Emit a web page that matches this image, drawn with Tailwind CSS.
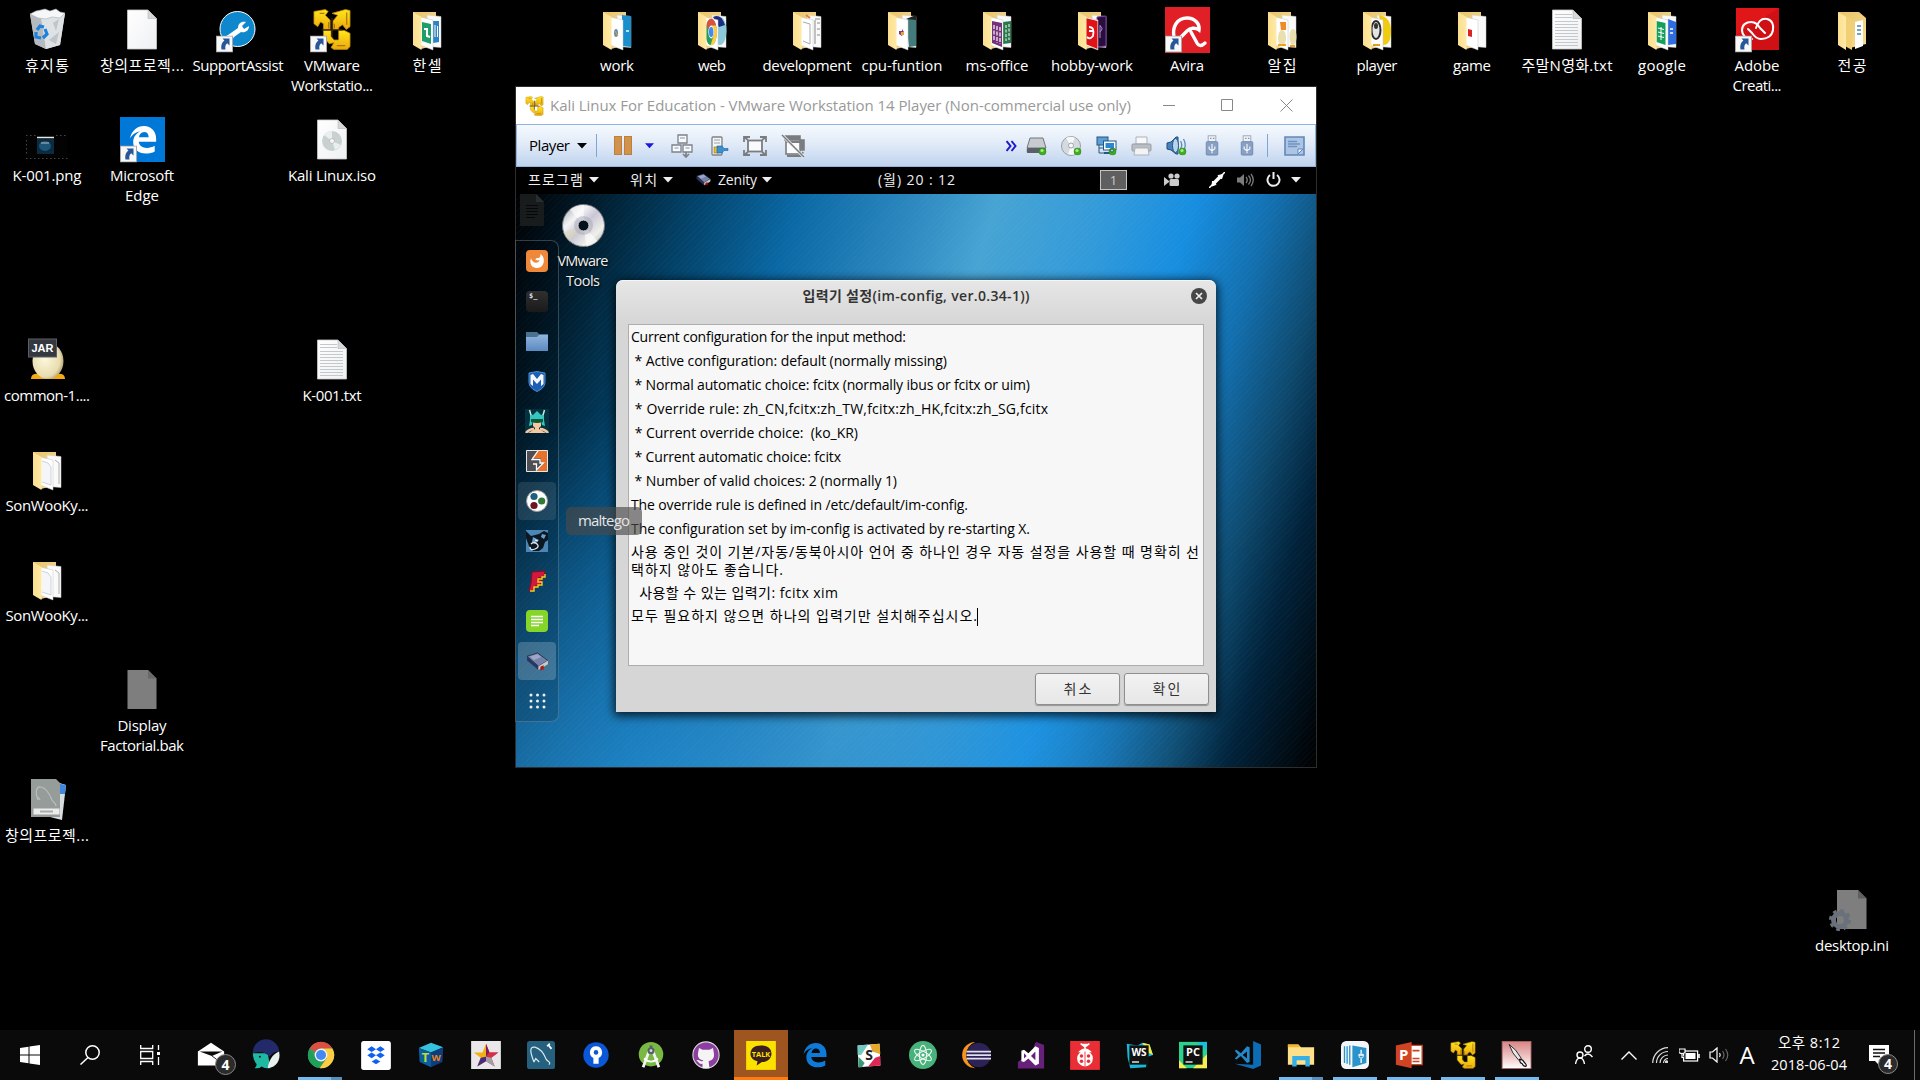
<!DOCTYPE html>
<html lang="ko">
<head>
<meta charset="utf-8">
<title>Desktop</title>
<script src="https://cdn.jsdelivr.net/npm/@tailwindcss/browser@4"></script>
</head>
<body class="bg-black overflow-hidden">
<svg width="0" height="0" class="absolute">
  <defs>
    <linearGradient id="gBack" x1="0" y1="0" x2="1" y2="1"><stop offset="0" stop-color="#e9c46c"/><stop offset="1" stop-color="#f7dc8e"/></linearGradient>
    <linearGradient id="gFlap" x1="0" y1="0" x2="1" y2="0"><stop offset="0" stop-color="#fbdf8d"/><stop offset="1" stop-color="#ffe9a6"/></linearGradient>
    <linearGradient id="gPage" x1="0" y1="0" x2="1" y2="1"><stop offset="0" stop-color="#ffffff"/><stop offset="1" stop-color="#eef0f2"/></linearGradient>
    <linearGradient id="gVm" x1="0" y1="0" x2="0" y2="1"><stop offset="0" stop-color="#ffe61c"/><stop offset="1" stop-color="#eda80e"/></linearGradient>
    <linearGradient id="gDisc" x1="0" y1="0" x2="1" y2="1"><stop offset="0" stop-color="#9a9ca4"/><stop offset=".3" stop-color="#f4f4f6"/><stop offset=".5" stop-color="#c9c6d6"/><stop offset=".75" stop-color="#f0f0ea"/><stop offset="1" stop-color="#a5a5ad"/></linearGradient>
    <linearGradient id="gBlueV" x1="0" y1="0" x2="0" y2="1"><stop offset="0" stop-color="#8fb4dd"/><stop offset="1" stop-color="#5b8ac0"/></linearGradient>
    <radialGradient id="gEgg" cx=".4" cy=".45" r=".7"><stop offset="0" stop-color="#fdf8dc"/><stop offset=".7" stop-color="#e8dcae"/><stop offset="1" stop-color="#8f8050"/></radialGradient>
    <linearGradient id="gKnife" x1="0" y1="0" x2="0" y2="1"><stop offset="0" stop-color="#d98484"/><stop offset=".6" stop-color="#f0caca"/><stop offset="1" stop-color="#fff"/></linearGradient>
  </defs>
  <symbol id="page" viewBox="0 0 48 48"><path d="M9.500 5h20.500l8.500 8.500v30.500h-29z" fill="url(#gPage)" stroke="#c9c9c9" stroke-width=".8"/><path d="M30 5v8.500h8.500z" fill="#d5d7d9" stroke="#b5b5b5" stroke-width=".6"/></symbol>
  <symbol id="lines" viewBox="0 0 48 48"><path d="M12 9.500h17M12 12.500h17M12 16.500h23M12 19.500h23M12 22.500h23M12 25.500h23M12 28.500h23M12 31.500h23M12 34.500h23M12 37.500h23M12 40.500h23" stroke="#c5c8cb" stroke-width="1"/></symbol>
  <symbol id="short" viewBox="0 0 17 17"><rect x=".5" y=".5" width="16" height="16" fill="#f8f8f8" stroke="#a8a8a8"/><path d="M13.500 3v7l-2.300-2.300c-2 1.800-2.200 3.300-1.700 6.300h-4c-.8-4.500.6-7.200 2.900-9L6.500 3z" fill="#28569a"/></symbol>
  <symbol id="vm" viewBox="0 0 40 44"><g fill="url(#gVm)" stroke="#b8860b" stroke-width=".8" stroke-linejoin="round"><path d="M1 3l12-2 3 2-3 4 5 5v10h-7v-6l-3-2-3 5-4-3z"/><path d="M20 5l14-4 5 1v17l-4 3-4-5-4 3v2h-6v-9l5-6z"/><path d="M11 23h8v6l3 4h5V23h6l6 3v14l-3 3H22l-3-2 3-5-5 1-6-7z"/></g><path d="M35.500 4v13M7 5h5M25 39h9M16.500 14v7M22.500 16v5" stroke="#a87a08" stroke-width="1.300"/><path d="M9 22.300h22M20 10v20" stroke="#3a2900" stroke-width="1.300"/></symbol>
  <symbol id="edge" viewBox="0 0 32 32"><path d="M2 15C4 6 10 1.500 17 1.500c8 0 13 6 13 13.500v3.500H11.500c.3 4.200 4 6.500 8.500 6.500 3.200 0 6-.8 8.500-2.300v6C26 30.200 22.500 31 19 31c-8 0-13.500-5-13.500-12 0-5.500 3-9.500 7.500-11.500C8 8 4.500 11 2 15zm9.700-1.500H22c0-3.500-1.800-5.500-4.900-5.500-3 0-4.900 2.400-5.400 5.500z"/></symbol>
  <symbol id="chrome" viewBox="0 0 32 32"><circle cx="16" cy="16" r="15" fill="#34a05a"/><path d="M3 8.500A15 15 0 0129 8.500H16a7.500 7.500 0 00-6.500 3.700z" fill="#dd4f40"/><path d="M3 8.500L9.500 20 16 23.500l-3 7.200A15 15 0 013 8.500z" fill="#1f9f5b"/><path d="M29 8.500A15 15 0 0114.500 31L22.500 19.700 16 8.500z" fill="#ffcd43"/><circle cx="16" cy="16" r="7.300" fill="#f1f1f1"/><circle cx="16" cy="16" r="5.700" fill="#4587f3"/></symbol>
  <symbol id="tri" viewBox="0 0 10 6"><path d="M0 0h10L5 5.500z" fill="currentColor"/></symbol>
  <symbol id="ball" viewBox="0 0 8 8"><circle cx="4" cy="4" r="3.600" fill="#3fae22" stroke="#267c12" stroke-width=".5"/><circle cx="3.500" cy="3" r="1.600" fill="#a3ee7c"/></symbol>
  <symbol id="usb" viewBox="0 0 14 22"><rect x="3" y=".8" width="8" height="7" fill="#eef1f5" stroke="#9fa9b8"/><path d="M5 3.500h1.500M8 3.500h1.500" stroke="#8894a6" stroke-width="1.500"/><rect x="1" y="7" width="12" height="14" rx="1" fill="#87a0c4" stroke="#6e88b0"/><path d="M7 19V9.500M4 12v2.500l3 2 3-2V12" stroke="#fff" stroke-width="1.100" fill="none"/></symbol>
  <symbol id="book" viewBox="0 0 24 20"><path d="M1 4.500L12 1l11 8-10 6z" fill="#7582ab" stroke="#1c2440" stroke-width=".8"/><path d="M1 5l12 10v4L1 9z" fill="#2b3560"/><path d="M13 15l10-6v4l-10 6z" fill="#c9c9c6"/><path d="M15 15.500l3.500-1.500v5.500L17 18l-2 2z" fill="#b01515"/><path d="M4 4.800l8-2.500 4 3-8 3.500z" fill="#a7b0cd" opacity=".8"/></symbol>
</svg>

<main class="relative w-[1920px] h-[1080px] overflow-hidden bg-black text-white font-['Open_Sans','Noto_Sans_CJK_KR',sans-serif]">
  <div id="desktop"></div>

  <!-- VMware player window -->
  <section class="absolute left-[515px] top-[86px] w-[802px] h-[682px] flex flex-col border border-[#2d2d2d] bg-black">
    <header class="h-[37px] shrink-0 bg-white flex items-center text-[#999]">
      <svg class="w-[19px] h-[20px] ml-[9px]"><use href="#vm"/></svg>
      <span class="ml-[6px] text-[15px] whitespace-pre" data-w="581">Kali Linux For Education - VMware Workstation 14 Player (Non-commercial use only)</span>
      <svg class="ml-auto w-[13px] h-[13px] mr-[45px]" viewBox="0 0 13 13"><path d="M0 6.500h12" stroke="#888"/></svg>
      <svg class="w-[13px] h-[13px] mr-[46px]" viewBox="0 0 13 13"><path d="M.5.500h11v11H.5z" fill="none" stroke="#888"/></svg>
      <svg class="w-[13px] h-[13px] mr-[23px]" viewBox="0 0 13 13"><path d="M.5.500l12 12M12.500.500l-12 12" stroke="#888"/></svg>
    </header>
    <div class="h-[43px] shrink-0 border border-[#92b5e0] border-t-[#8fb3e2] bg-linear-to-b from-[#f6fafe] via-[#dfe9f7] to-[#bfd3ee] flex items-center text-black">
      <span class="ml-[12px] text-[15px] -mt-[1px]" data-w="41">Player</span>
      <svg class="w-[10px] h-[6px] ml-[7px]"><use href="#tri"/></svg>
      <i class="w-px h-[23px] bg-[#7fa5d6] ml-[9px]"></i>
      <div class="flex gap-[2px] ml-[17px]"><i class="w-[8px] h-[19px] bg-[#d3924c] border border-[#b9803f]"></i><i class="w-[8px] h-[19px] bg-[#d3924c] border border-[#b9803f]"></i></div>
      <svg class="w-[9px] h-[6px] ml-[13px] text-[#1a1ad8]"><use href="#tri"/></svg>
      <svg class="w-[22px] h-[24px] ml-[17px]" viewBox="0 0 22 24" fill="#f8f9fb" stroke="#7d8187" stroke-width="1.300"><path d="M7 1h9v8H7zM1 11h9v7H1zM12 11h9v7h-9z"/><path d="M9 4h5M3.500 14h4M14.500 14h4" stroke="#b4c9df" stroke-width="2"/><path d="M15 18v5M12 20l3 3 3-3" fill="none" stroke-width="1.700"/></svg>
      <svg class="w-[18px] h-[20px] ml-[18px]" viewBox="0 0 18 20"><rect x="1" y="1" width="10" height="18" rx="1" fill="#f4f5f6" stroke="#7d8187" stroke-width="1.300"/><path d="M3 4h6M3 7h6" stroke="#9aa0a7"/><rect x="3" y="11" width="5" height="6" fill="#e2bd38" stroke="#937716" stroke-width=".6"/><path d="M6 10h5l2 2.500h4v2h-4L11 17H6z" fill="#3b8fd0" stroke="#1d5f98" stroke-width=".6"/></svg>
      <svg class="w-[24px] h-[20px] ml-[14px]" viewBox="0 0 24 20" fill="none" stroke="#7a7c80" stroke-width="1.800"><rect x="5" y="4.500" width="14" height="11" fill="#f9fafc"/><path d="M1 6V1h6M17 1h6v5M23 14v5h-6M7 19H1v-5M1 1l4 3M23 1l-4 3M23 19l-4-3M1 19l4-3"/></svg>
      <svg class="w-[24px] h-[24px] ml-[14px]" viewBox="0 0 24 24" stroke="#7a7c80" stroke-width="1.600"><path d="M4 2h15v4h4v10h-4V6H4z" fill="#7a7c80"/><rect x="5" y="6" width="14" height="14" fill="#fafbfd"/><path d="M5 8h14M6 22h14l2-4" fill="none" stroke-width="2"/><path d="M1 1l22 22" stroke="#f5f5f5" stroke-width="3"/><path d="M1 1l22 22"/></svg>
      <svg class="ml-auto w-[11px] h-[12px]" viewBox="0 0 11 12" fill="none" stroke="#1a1ad0" stroke-width="2"><path d="M.5 1l4 5-4 5M5.500 1l4 5-4 5"/></svg>
      <svg class="w-[21px] h-[20px] ml-[9px]" viewBox="0 0 21 20"><path d="M4 2h13l3 10H1z" fill="#c7cbcf" stroke="#72777d"/><rect x=".8" y="12" width="19" height="5" rx="1" fill="#5a6067"/><use href="#ball" x="12.500" y="11.500" width="8" height="8"/></svg>
      <svg class="w-[21px] h-[20px] ml-[14px]" viewBox="0 0 21 20"><circle cx="10" cy="10" r="9.500" fill="#d5dade" stroke="#98a0a7"/><path d="M10 10L5 2a9 9 0 019 0zM10 10l6 7a9 9 0 01-9 1z" fill="#fff" opacity=".8"/><circle cx="10" cy="9.500" r="2.500" fill="#f8fafc" stroke="#9aa4ad"/><use href="#ball" x="12.500" y="11.500" width="8" height="8"/></svg>
      <svg class="w-[21px] h-[20px] ml-[14px]" viewBox="0 0 21 20" stroke="#23587f"><rect x="1" y="1" width="11" height="8" fill="#5b9fd6"/><path d="M3 9v8h5M3 12h4" fill="none"/><rect x="7.500" y="5" width="12.500" height="9" fill="#fff"/><rect x="9.500" y="7" width="8.500" height="5" fill="#2a87d3" stroke="none"/><path d="M8 17h9" stroke-width="2"/><use href="#ball" x="12.500" y="11.500" width="8" height="8"/></svg>
      <svg class="w-[21px] h-[20px] ml-[14px]" viewBox="0 0 21 20"><path d="M5 1h11v7H5z" fill="#f7f8f9" stroke="#aeb2b8"/><rect x="1" y="8" width="19" height="7" rx="1" fill="#b9bdc4" stroke="#989da5"/><path d="M4 12h13l1 7H3z" fill="#f2f3f5" stroke="#aeb2b8"/></svg>
      <svg class="w-[21px] h-[20px] ml-[14px]" viewBox="0 0 21 20"><path d="M1 7l4-1 5-5h2v17h-2l-5-4-4-1z" fill="#4783ba" stroke="#1e4f80"/><ellipse cx="9.500" cy="9.500" rx="3" ry="7" fill="#b7d4ec" stroke="#27587f"/><path d="M14.500 5q2.500 4 0 8M17.500 3q3.500 6 0 12" fill="none" stroke="#5a8cbb" stroke-width="1.300"/><use href="#ball" x="12.500" y="11.500" width="8" height="8"/></svg>
      <svg class="w-[14px] h-[21px] ml-[18px]"><use href="#usb"/></svg>
      <svg class="w-[14px] h-[21px] ml-[21px]"><use href="#usb"/></svg>
      <i class="w-px h-[23px] bg-[#7fa5d6] ml-[13px]"></i>
      <svg class="w-[21px] h-[20px] ml-[16px] mr-[10px]" viewBox="0 0 21 20"><path d="M1 1h19v18H1z" fill="#adc5e4" stroke="#6387b8" stroke-width="1.600"/><path d="M4 5.500h9M4 8h12M4 10.500h9" stroke="#6e92c1" stroke-width="1.500"/><path d="M14 18v-5h5z" fill="#eef4fb" stroke="#6387b8"/></svg>
    </div>

    <!-- Guest desktop -->
    <div class="relative w-[800px] h-[600px] flex flex-col text-[#eee]">
      <div class="h-[27px] shrink-0 bg-black flex items-center text-[14px] pb-[2px]">
        <span class="ml-[12px]" data-w="55">프로그램</span><svg class="w-[10px] h-[6px] ml-[6px]"><use href="#tri"/></svg>
        <span class="ml-[31px]" data-w="27">위치</span><svg class="w-[10px] h-[6px] ml-[6px]"><use href="#tri"/></svg>
        <svg class="w-[15px] h-[13px] ml-[23px]"><use href="#book"/></svg>
        <span class="ml-[7px]" data-w="39">Zenity</span><svg class="w-[10px] h-[6px] ml-[5px]"><use href="#tri"/></svg>
        <span class="ml-[106px] whitespace-pre" data-w="77">(월) 20 : 12</span>
        <span class="ml-auto w-[27px] h-[20px] mt-px border border-[#c4c4c4] bg-[#5f5f5f] text-center leading-[18px] text-[13px] text-[#ccc]">1</span>
        <svg class="w-[16px] h-[13px] ml-[37px]" viewBox="0 0 16 13" fill="#ccc"><circle cx="7" cy="3" r="2.600"/><circle cx="13" cy="3" r="2.600"/><rect x="5.500" y="6" width="9.500" height="7" rx="1.500"/><path d="M0 4l5 4v1l-5 4z"/></svg>
        <svg class="w-[16px] h-[16px] ml-[29px]" viewBox="0 0 16 16" stroke="#fff" fill="#fff"><path d="M0 16L16 0" stroke-width="1.500"/><path d="M3.500 9l3.500 3.500-4 1.500zM9 3.500L12.500 7 14 2.500z" stroke-width="1"/><path d="M5 11l6-6" stroke-width="3.500"/></svg>
        <svg class="w-[17px] h-[14px] ml-[12px]" viewBox="0 0 17 14" fill="#7b7b7b"><path d="M0 4.500h3L7 1v12L3 9.500H0z"/><path d="M9 4q2.500 3 0 6M11.500 2.500q4 4.500 0 9M14 1q4.500 6 0 12" fill="none" stroke="#7b7b7b" stroke-width="1.300"/></svg>
        <svg class="w-[15px] h-[15px] ml-[12px]" viewBox="0 0 15 15" fill="none" stroke="#eee" stroke-width="2"><path d="M4 3a6 6 0 107 0M7.500 0v7"/></svg>
        <svg class="w-[10px] h-[6px] ml-[10px] mr-[15px]"><use href="#tri"/></svg>
      </div>
      <div class="relative flex-1 bg-[linear-gradient(107deg,#000_0%,#000a12_3%,#01263c_11%,#03446c_19%,#0a68a4_29%,#2c88bf_41%,#47a4d3_49.5%,#349bd9_60%,#178ee0_70%,#136fae_78%,#0e4a6f_85%,#01223a_91%,#000_100%)]">
        <div class="absolute inset-0 bg-[radial-gradient(ellipse_55%_75%_at_16%_112%,rgba(36,140,208,.75)_0%,rgba(30,125,190,.45)_45%,transparent_100%),linear-gradient(180deg,transparent_60%,rgba(80,190,255,.14)_100%)] [mask-image:linear-gradient(107deg,#000_75%,transparent_90%)]"></div>
        <div class="absolute inset-0 bg-[repeating-linear-gradient(135deg,rgba(255,255,255,.02)_0_1px,transparent_1px_4px)]"></div>
        <svg class="absolute left-[4px] top-0 w-[24px] h-[32px]" viewBox="0 0 24 32"><path d="M0 0h16l8 8v24H0z" fill="#191c1d"/><path d="M16 0v8h8z" fill="#2a2d2e"/><path d="M6 11.500h12M6 14.500h12M6 17.500h12M6 20.500h12M6 23.500h9" stroke="#060707"/></svg>
        <div class="absolute left-[37px] top-[10px] w-[60px] flex flex-col items-center text-[14.500px] leading-[20px] [text-shadow:1px_1px_2px_#000]">
          <svg class="w-[43px] h-[43px] mb-[4px]" viewBox="0 0 43 43"><circle cx="21.500" cy="21.500" r="21" fill="url(#gDisc)" stroke="#77777c"/><path d="M21.500 21.500L8 5.500A21 21 0 0122 1zM21.500 21.500l14 15.500a21 21 0 01-11 5.500z" fill="#fff" opacity=".6"/><path d="M21.500 21.500L1.500 28a21 21 0 006 9.500z" fill="#d9d7b8" opacity=".5"/><circle cx="21.500" cy="21.500" r="9.500" fill="#a9a5b6" opacity=".5"/><circle cx="21.500" cy="21.500" r="5.500" fill="#03111c" stroke="#dcdcdc"/></svg>
          <span data-w="51">VMware</span><span data-w="34">Tools</span>
        </div>
        <!-- Dock -->
        <div class="absolute left-[-1px] top-[46px] w-[44px] h-[482px] rounded-r-[8px] border border-[#8fa3b0]/35 bg-black/15 flex flex-col items-center">
          <div class="h-[40px] shrink-0 w-[38px] flex items-center justify-center"><svg class="w-[22px] h-[22px]" viewBox="0 0 22 22"><rect width="22" height="22" rx="4" fill="#f0883a"/><path d="M5 8c-2 6 1 10 6 10s8-5 6.500-10C17 6 15 4 14 4c1 2 0 3.500-1.500 4C11 8 9.500 8 9.500 9.500c1 1.500 3 .5 4 1-1 2.500-4.500 3-6.500 1S5.500 9 5 8z" fill="#fff"/></svg></div>
          <div class="h-[40px] shrink-0 w-[38px] flex items-center justify-center"><div class="w-[22px] h-[21px] rounded-[4px] bg-linear-to-b from-[#303030] to-[#1a1a1a] text-[7px] leading-[11px] pl-[3px] font-['DejaVu_Sans_Mono',monospace] font-bold text-[#ddd]">$_</div></div>
          <div class="h-[40px] shrink-0 w-[38px] flex items-center justify-center"><svg class="w-[22px] h-[20px]" viewBox="0 0 22 20"><path d="M0 1h11l2 2h9v6H0z" fill="#4b7191"/><path d="M0 6h11l2-2h9v16H0z" fill="url(#gBlueV)"/></svg></div>
          <div class="h-[40px] shrink-0 w-[38px] flex items-center justify-center"><svg class="w-[18px] h-[21px]" viewBox="0 0 18 21"><path d="M1 2l8-1.500L17 2v9c0 5-4 7.500-8 9.500-4-2-8-4.500-8-9.500z" fill="#1d5fb4" stroke="#4c8fd6"/><path d="M2.500 4L5 3l4 5 4-5 2.500 1v9L13 15V8.500L9 13 5 8.500V15l-2.500-2z" fill="#f4f7fb"/></svg></div>
          <div class="h-[40px] shrink-0 w-[38px] flex items-center justify-center"><svg class="w-[24px] h-[24px]" viewBox="0 0 24 24"><rect width="24" height="24" fill="#04323e"/><path d="M8 13h8v4l-2 2v1l7 4H3l7-4v-1l-2-2z" fill="#f4c9a0"/><path d="M5 5l3 1 4-4 4 4 3-1v6l1 6-3-1-1-5H8l-1 5-3 1 1-6z" fill="#35c6c4"/><path d="M6 10h12v3q-6 2-12 0z" fill="#0b5a34"/><path d="M4.500 1l1.500 5M19.500 1L18 6" stroke="#c7ecd6" stroke-width="1.500"/><path d="M1 24q3-4 8-4M23 24q-3-4-8-4" stroke="#f4c9a0" stroke-width="2.500"/></svg></div>
          <div class="h-[40px] shrink-0 w-[38px] flex items-center justify-center"><svg class="w-[22px] h-[22px]" viewBox="0 0 22 22"><path d="M.5.500h21v21H.5z" fill="#e9722a"/><path d="M.5.500h11L6 8h9v4.500h4L10 21.500H.5z" fill="#4d4f54"/><path d="M12 1L6 9.500h8V13h3.500L10.500 20v-6H7" fill="none" stroke="#fff" stroke-width="1.300"/><path d="M.5.500h21v21H.5z" fill="none" stroke="#e8e8e8"/></svg></div>
          <div class="h-[38px] shrink-0 my-px w-[38px] flex items-center justify-center rounded-[4px] bg-white/10"><svg class="w-[22px] h-[22px]" viewBox="0 0 22 22"><circle cx="11" cy="11" r="10.500" fill="#fff" stroke="#999"/><circle cx="8" cy="6.500" r="3.600" fill="#1f5f7e"/><circle cx="15.700" cy="11" r="3.600" fill="#2f7a38"/><circle cx="8" cy="15.500" r="3.600" fill="#701623"/></svg></div>
          <div class="h-[40px] shrink-0 w-[38px] flex items-center justify-center"><svg class="w-[22px] h-[22px]" viewBox="0 0 22 22"><rect width="22" height="22" fill="#4b86b6"/><path d="M0 1l5 5 8-2 5-3 4 2v7l-3 2-2 6-4 3H7l-4-5L0 8z" fill="#0c1721"/><path d="M7 7l6 3-4 4-3-2zM16 4l4 1-2 4-3-2z" fill="#69a1cc"/><path d="M5 14q3-3 6 0t-2 5-5-2" fill="none" stroke="#dce9f2" stroke-width="1.300"/><path d="M9 10l3 1" stroke="#fff"/></svg></div>
          <div class="h-[40px] shrink-0 w-[38px] flex items-center justify-center"><svg class="w-[19px] h-[22px]" viewBox="0 0 19 22"><path d="M4 2l13-1-1 6-6 1-1 2 5 0-2 5-5 1-1 4-5 1 2-8z" fill="#d2183c" stroke="#8c0a20"/><path d="M17 4v3h-3v2h-4v3h4v3h-4v2H6v4H2" fill="none" stroke="#f7cf1d" stroke-width="1.400"/></svg></div>
          <div class="h-[40px] shrink-0 w-[38px] flex items-center justify-center"><svg class="w-[22px] h-[22px]" viewBox="0 0 22 22"><rect width="22" height="22" rx="4" fill="#86d62a"/><path d="M5 6.500h12M5 9.500h12M5 12.500h12M5 15.500h8" stroke="#fff" stroke-width="1.300"/></svg></div>
          <div class="relative h-[38px] shrink-0 my-px w-[38px] flex items-center justify-center rounded-[4px] bg-white/20"><svg class="w-[23px] h-[19px]"><use href="#book"/></svg><i class="absolute left-0 top-[17px] w-[3px] h-[3px] rounded-full bg-[#2e6fd0]"></i></div>
          <div class="h-[40px] shrink-0 w-[38px] flex items-center justify-center"><svg class="w-[17px] h-[16px]" viewBox="0 0 17 16" fill="#eee"><circle cx="2" cy="2" r="1.500"/><circle cx="8.500" cy="2" r="1.500"/><circle cx="15" cy="2" r="1.500"/><circle cx="2" cy="8" r="1.500"/><circle cx="8.500" cy="8" r="1.500"/><circle cx="15" cy="8" r="1.500"/><circle cx="2" cy="14" r="1.500"/><circle cx="8.500" cy="14" r="1.500"/><circle cx="15" cy="14" r="1.500"/></svg></div>
        </div>
        <!-- Dialog -->
        <div class="absolute left-[100px] top-[86px] w-[600px] h-[432px] rounded-t-[7px] bg-[#d6d6d6] shadow-[0_2px_10px_2px_rgba(0,0,0,.75)] flex flex-col text-black">
          <div class="relative h-[44px] shrink-0 rounded-t-[7px] border-t border-white/80 bg-linear-to-b from-[#e6e6e6] to-[#d6d6d6] flex justify-center pt-[5px]">
            <b class="text-[14px] leading-[20px] font-semibold text-[#333] whitespace-pre h-[20px]" data-w="227">입력기 설정(im-config, ver.0.34-1))</b>
            <svg class="absolute right-[9px] top-[7px] w-[16px] h-[16px]" viewBox="0 0 16 16"><circle cx="8" cy="8" r="8" fill="#474747"/><path d="M5 5l6 6M11 5l-6 6" stroke="#eee" stroke-width="1.700"/></svg>
          </div>
          <div class="ml-[12px] w-[576px] h-[342px] border border-[#adadad] bg-[#f7f7f7] pl-[2px] text-[14px] leading-[24px] whitespace-pre flex flex-col items-start">
            <span class="h-[24px]" data-w="275">Current configuration for the input method:</span>
            <span class="h-[24px]" data-w="316"> * Active configuration: default (normally missing)</span>
            <span class="h-[24px]" data-w="399"> * Normal automatic choice: fcitx (normally ibus or fcitx or uim)</span>
            <span class="h-[24px]" data-w="417"> * Override rule: zh_CN,fcitx:zh_TW,fcitx:zh_HK,fcitx:zh_SG,fcitx</span>
            <span class="h-[24px]" data-w="227"> * Current override choice:  (ko_KR)</span>
            <span class="h-[24px]" data-w="210"> * Current automatic choice: fcitx</span>
            <span class="h-[24px]" data-w="266"> * Number of valid choices: 2 (normally 1)</span>
            <span class="h-[24px]" data-w="337">The override rule is defined in /etc/default/im-config.</span>
            <span class="h-[24px]" data-w="399">The configuration set by im-config is activated by re-starting X.</span>
            <span class="h-[22px] leading-[22px]" data-w="568">사용 중인 것이 기본/자동/동북아시아 언어 중 하나인 경우 자동 설정을 사용할 때 명확히 선</span>
            <span class="h-[16px] leading-[14px]" data-w="152">택하지 않아도 좋습니다.</span>
            <span class="h-[28px] leading-[27px]" data-w="207">  사용할 수 있는 입력기: fcitx xim</span>
            <div class="flex h-[19px] items-center"><span class="leading-[18px] -mt-px" data-w="346">모두 필요하지 않으면 하나의 입력기만 설치해주십시오.</span><i class="w-px h-[18px] bg-black"></i></div>
          </div>
          <div class="flex justify-end gap-[4px] pr-[7px] pt-[7px] text-[14px] text-[#333]">
            <div class="w-[85px] h-[32px] pb-[2px] rounded-[3px] border border-[#8f8f8f] bg-linear-to-b from-[#f2f2f2] to-[#e7e7e7] shadow-[0_1px_1px_rgba(0,0,0,.3)] flex items-center justify-center"><span data-w="28">취소</span></div>
            <div class="w-[85px] h-[32px] pb-[2px] rounded-[3px] border border-[#8f8f8f] bg-linear-to-b from-[#f2f2f2] to-[#e7e7e7] shadow-[0_1px_1px_rgba(0,0,0,.3)] flex items-center justify-center"><span data-w="28">확인</span></div>
          </div>
        </div>
        <div class="absolute left-[50px] top-[313px] w-[76px] h-[28px] pb-[2px] rounded-[5px] bg-[#4a4a4a]/65 flex items-center justify-center text-[15px] text-[#e6e6e6]"><span data-w="52">maltego</span></div>
      </div>
    </div>
  </section>

  <!-- Taskbar -->
  <footer class="absolute left-0 top-[1030px] w-[1920px] h-[50px] bg-[#0a0a0a] flex items-center">
    <div class="w-[60px] flex justify-center"><svg class="w-[20px] h-[20px]" viewBox="0 0 20 20" fill="#fff"><path d="M0 3l8.500-1.200v7.700H0zM9.500 1.600L20 0v9.500H9.500zM0 10.500h8.500v7.700L0 17zM9.500 10.500H20V20L9.500 18.400z"/></svg></div>
    <div class="w-[60px] flex justify-center"><svg class="w-[20px] h-[20px]" viewBox="0 0 20 20" fill="none" stroke="#fff" stroke-width="1.500"><circle cx="12.500" cy="7.500" r="6.700"/><path d="M8 12.500L.5 19.500"/></svg></div>
    <div class="w-[63px] flex justify-center pr-[3px]"><svg class="w-[20px] h-[20px]" viewBox="0 0 20 20" fill="none" stroke="#fff" stroke-width="1.300"><path d="M.7 0v3.500h12V0M.7 20v-3.500h12V20M.7 6.500h12v7H.7zM18.500 0v5M18.500 12v8"/><path d="M17 7h3v3h-3z" fill="#fff" stroke="none"/></svg></div>
    <div id="tasks" class="flex h-[50px]"></div>
    <svg class="ml-[31px] w-[18px] h-[20px]" viewBox="0 0 18 20" fill="none" stroke="#fff" stroke-width="1.400"><circle cx="13" cy="4" r="3.300"/><path d="M9.500 11q3.500-4.500 8 1"/><circle cx="5" cy="10" r="3"/><path d="M.5 19q1-6 4.500-6t4.500 6"/></svg>
    <svg class="ml-[28px] w-[16px] h-[9px]" viewBox="0 0 16 9" fill="none" stroke="#fff" stroke-width="1.400"><path d="M.5 8.500L8 1l7.500 7.500"/></svg>
    <svg class="ml-[15px] w-[16px] h-[16px]" viewBox="0 0 16 16" fill="none" stroke="#ddd" stroke-width="1.200"><path d="M.7 16A15.500 15.500 0 0116 .7M4.500 16A11.500 11.500 0 0116 4.500M8 16a8 8 0 018-8M11.500 16a4.500 4.500 0 014.500-4.500"/><circle cx="14.500" cy="14.800" r="1" fill="#fff"/></svg>
    <svg class="ml-[11px] w-[21px] h-[14px]" viewBox="0 0 21 14" fill="none" stroke="#fff" stroke-width="1.200"><rect x="4.600" y="3" width="14" height="10"/><rect x="6.500" y="5" width="10" height="6" fill="#fff" stroke="none"/><path d="M20 6v4" stroke-width="1.600"/><path d="M0 1h6v3.500q-3 2-6 0zM3 5v4.500h2" fill="#0a0a0a"/></svg>
    <svg class="ml-[9px] w-[20px] h-[16px]" viewBox="0 0 20 16" fill="none" stroke="#fff" stroke-width="1.200"><path d="M1 5h2.500L8 1v14l-4.500-4H1z"/><path d="M10.500 6q1.500 2 0 4"/><path d="M13.500 4q3 4 0 8M16.500 2q4.500 6 0 12" stroke="#666"/></svg>
    <span class="w-[18px] ml-[9px] text-[24px] leading-[50px] flex justify-center">A</span>
    <div class="w-[80px] ml-[13px] flex flex-col items-center text-[14.500px] leading-[22px] -mt-[2px]"><span data-w="62">오후 8:12</span><span data-w="76">2018-06-04</span></div>
    <div class="relative ml-[20px] w-[32px] h-[32px]"><svg class="absolute left-[0px] top-[6px] w-[20px] h-[21px]" viewBox="0 0 20 21"><path d="M0 0h20v16h-9v5l-5-5H0z" fill="#fff"/><path d="M4 4.500h12M4 8h12M4 11.500h7" stroke="#111" stroke-width="1.400"/></svg><b class="absolute left-[9px] top-[15px] w-[20px] h-[20px] rounded-full border border-[#888] bg-[#2b2b2b] text-[14px] leading-[18px] text-center">4</b></div>
    <i class="ml-auto mr-[5px] w-px h-[50px] bg-[#6b6b6b]"></i>
  </footer>
</main>

<script>
const page = '<use href="#page"/>';
const shortcut = '<use href="#short" x="2" y="30.500" width="17" height="17"/>';
// Open folder seen from the side; front and back are the previews drawn on its two sheets.
const folder = (front = '', back = '') => `
  <path d="M10 7l23 0v33l-15 4z" fill="url(#gBack)"/>
  <path d="M24 10l14 1.500v31l-13-1z" fill="#fafafa" stroke="#c9c9c9" stroke-width=".5"/>${back}
  <path d="M17 12l13 3v30l-13-5z" fill="#fff" stroke="#c4c4c4" stroke-width=".5"/>${front}
  <path d="M10 7l8.500 5v33L10 40z" fill="url(#gFlap)"/>`;
const icons = {
  bin: '<path d="M7 9l35-1-5 32-14 4-11-5z" fill="#cfd3d6"/><path d="M7 9l11 3 5 32-11-5z" fill="#b4babf"/><path d="M18 12l24-4-5 32-14 4z" fill="#dfe2e4"/><path d="M7 9l6-3 5-1 4-1 5 2 6-2 4 3 5 1-5 5-8-1-6 2-8-1z" fill="#f6f7f8" stroke="#a7adb2" stroke-width=".6"/><path d="M30 18l6-4-3 12zM26 35l7 4 3-12z" fill="#bfc5c9"/><g fill="none" stroke="#1c82dc" stroke-width="3.200"><path d="M14 25l3-4 4 1M22 24l2 5-4 4M18 33l-5-1v-5"/></g>',
  page,
  support: '<circle cx="23.500" cy="24" r="17.500" fill="#0e87cd" stroke="#fff" stroke-width="1"/><path d="M14 30l10-7c0-4 3-7 8-6l-4 4 2 3 5-3c0 5-4 7-8 6l-7 5c-1 3-7 4-8 1 0-2 1-3 2-3z" fill="#fff"/>' + shortcut,
  vm: '<use href="#vm" x="5" y="3" width="38" height="43"/>' + shortcut,
  hancell: folder('<path d="M19 17l9 2v20l-9-3z" fill="#1f9d6b"/><path d="M21 24l3 0 0 7 3 1" stroke="#fff" stroke-width="2" fill="none"/>', '<path d="M30 16l6 0v21l-6 1z" fill="#2f83c4"/><path d="M32 20v12M34.500 21v11" stroke="#fff"/>'),
  shot: '<rect x="2.500" y="20" width="42" height="24" fill="#030303"/><rect x="14" y="24" width="17" height="15" fill="#0a2b40"/><ellipse cx="22" cy="31" rx="6" ry="5" fill="#1c5576"/><path d="M14 22.500h17" stroke="#e8e8e8" stroke-width="1.500"/><path d="M3 20.500h11M33 20.500h11M3.500 25v14M3 43.500h42" stroke="#444" stroke-dasharray="1.500 2.500"/><path d="M18 28h8" stroke="#bbb"/>',
  edge: '<rect x="2" y="2" width="45" height="45" fill="#0078d7"/><use href="#edge" x="10" y="9.500" width="30" height="30" fill="#fff"/>' + shortcut,
  iso: page + '<circle cx="24" cy="26" r="10" fill="#c9d0d0"/><path d="M24 26l-8-6a10 10 0 018-4zM24 26l9 4a10 10 0 01-6 5z" fill="#e9eeee"/><circle cx="24" cy="26" r="2.500" fill="#f6f6f6" stroke="#aaa" stroke-width=".6"/>',
  work: folder('<ellipse cx="23" cy="28" rx="2" ry="4" fill="#6b8fa6"/><path d="M22 26l3 5" stroke="#d8a545"/>', '<path d="M29 10l9 1v31l-9-1z" fill="#1a8fce"/><path d="M33 26h3" stroke="#bfe3f6" stroke-width="2"/>'),
  web: folder('<g transform="translate(17 12) scale(.44 1)"><use href="#chrome" width="28" height="30"/></g>', '<ellipse cx="32" cy="26" rx="6.500" ry="14" fill="#8cc9dd"/><path d="M25 12q8-4 12 8l-6 2z" fill="#1d2b80"/>'),
  dev: folder('<path d="M20 17l7 2v20l-7-3" fill="none" stroke="#aaa"/><path d="M23 10l4 3" stroke="#e27f39" stroke-width="2"/>', '<path d="M32 15v24M34 18h3M34 24h3M34 30h3M32 14h5" stroke="#888" fill="none"/>'),
  cpu: folder('<path d="M21 26h3v-2l2 3-2 4-3-2z" fill="#8c3a74"/><path d="M23 27h3v3h-3z" fill="#e6a53a"/>', '<path d="M28 15l10-4v30l-7 1z" fill="#437b7d"/><path d="M28 14l10-4v5z" fill="#222"/>'),
  office: folder('<path d="M19 16l10 2v24l-10-4z" fill="#74317c"/><path d="M21 20v16M24 21v17M27 22v17" stroke="#fff" stroke-width="1.200" stroke-dasharray="4 1.500"/>', '<path d="M30 17l8-1v22l-8 1z" fill="#27794a"/><path d="M33 20v16M36 19v16" stroke="#fff" stroke-dasharray="3 1.500"/>'),
  hobby: folder('<path d="M17.500 13l12 3v28l-12-5z" fill="#df1219"/><path d="M21 22q6 0 4 9-3 4-6 1M21 26h5" stroke="#fff" stroke-width="1.800" fill="none"/>', '<path d="M29 12l9-1v30l-9 1z" fill="#2a0d3c" stroke="#7444a8"/><path d="M32 20v13M32 21q4 2 0 6" stroke="#b18adb" fill="none"/>'),
  avira: '<rect x="2" y="2" width="45" height="46" fill="#e01f26"/><path d="M11 32C9 22 14 13 24 13c8 0 13 6 12 12-4-3-9-2-12 1l-9 9M28 27l6 11q3 5 8 0" fill="none" stroke="#fff" stroke-width="3.400" stroke-linecap="round"/>' + shortcut,
  alzip: folder('<ellipse cx="24" cy="33" rx="4" ry="8" fill="#eadfae"/><path d="M22 17h6v8h-5z" fill="#f08b25"/><path d="M20 40h8" stroke="#f4a01c" stroke-width="2"/>', '<ellipse cx="35" cy="32" rx="3.500" ry="8" fill="#eadfae"/><path d="M32 41h5" stroke="#f4a01c" stroke-width="2"/>'),
  player: folder('<ellipse cx="23" cy="25" rx="4.500" ry="9" fill="#e4e4e4" stroke="#2c2c2c" stroke-width="2"/><ellipse cx="23" cy="21" rx="2" ry="3" fill="#333"/><path d="M20 40h7" stroke="#e59a20" stroke-width="2"/>', '<path d="M26 10q12 2 12 16t-8 14z" fill="#f0cc10"/>'),
  game: folder('<path d="M20 24l4 1v7l-4-1z" fill="#dd2222"/>'),
  text: page + '<use href="#lines"/>',
  google: folder('<path d="M18.500 16l9 2v22l-9-3z" fill="#13a05c"/><path d="M20 23l6 1.500M20 27l6 1.500M20 31l6 1.500M23 22v13" stroke="#fff"/>', '<path d="M30 14l8 3v22l-8 1z" fill="#2f6ee0"/><path d="M32 24h3M32 28h3" stroke="#fff" stroke-width="1.500"/>'),
  adobe: '<path d="M3 3h43v42H3z" fill="#cf1015"/><path d="M3 3h43L3 30z" fill="#e81a1a" opacity=".7"/><g fill="none" stroke="#fff" stroke-width="2" stroke-linecap="round"><path d="M19 34c-6 0-10-4-10-9s4-8 9-8 7 3 9 6l5 5"/><path d="M23 23c2-6 6-10 11-9 5 1 7 6 6 11-1 6-6 9-12 9-4 0-7-3-9-6l-4-4"/></g>' + shortcut,
  major: '<path d="M10 7l21 0 7 6v26l-16 4z" fill="url(#gBack)"/><path d="M27 17l8-2v26l-8 3z" fill="#fff"/><path d="M29 21h4M29 25h4M29 29h4" stroke="#48a" stroke-width="1.500"/><path d="M15 9l9 5v31l-9-5z" fill="#f1cf74"/><path d="M10 7l8 5v33l-8-5z" fill="url(#gFlap)"/>',
  jar: '<path d="M8 44q0-6 8-5h18q8-1 8 5z" fill="#f5aa14"/><ellipse cx="25" cy="26" rx="15.500" ry="18" fill="url(#gEgg)"/><rect x="5.500" y="4" width="28" height="18" fill="#363840" stroke="#5c5e66"/><text x="19.500" y="17" font-family="Liberation Sans" font-size="11" font-weight="bold" fill="#fff" text-anchor="middle">JAR</text>',
  docs: folder('<path d="M19 16l6 2 3 4v18l-9-3" fill="#f4f6fa" stroke="#c3c8d0" stroke-width=".8"/>', '<path d="M32 15l4 3v21" fill="none" stroke="#999" stroke-width=".8"/>'),
  bak: '<path d="M9.500 5h20.500l8.500 8.500v30.500h-29z" fill="#7e7e7e"/><path d="M30 5v8.500h8.500z" fill="#696969"/>',
  mysql: '<path d="M30 6l13 4-4 35-12-3z" fill="#d9dde0"/><path d="M33 8l10 2-1 9h-9z" fill="#3f86dc"/><path d="M8 4h25l4 4v34H8z" fill="#969c9a"/><path d="M15 25c-3-8-2-14 3-13 6 1 9 8 11 13 2 3 4 3 4 6M17 25l-2-3" fill="none" stroke="#b9bfbd" stroke-width="1.200"/><path d="M10.500 33.500h26v6h-26z" fill="#ececec"/><path d="M17 36.500h13" stroke="#aaa" stroke-width="2"/>',
  ini: '<path d="M9 5h21l8.500 8.500V44H9z" fill="#7e7e7e"/><path d="M30 5v8.500h8.500z" fill="#5f5f5f"/><circle cx="12" cy="35" r="9" fill="none" stroke="#69717a" stroke-width="4" stroke-dasharray="3.500 3.570"/><circle cx="12" cy="35" r="6.500" fill="none" stroke="#69717a" stroke-width="5"/>',
};
// [column centre, row, icon, ...[label line, width]]
const items = [
  [47,0,'bin',['휴지통',44]],[142,0,'page',['창의프로젝...',84]],[238,0,'support',['SupportAssist',91]],[332,0,'vm',['VMware',56],['Workstatio...',82]],[427,0,'hancell',['한셀',29]],
  [47,1,'shot',['K-001.png',69]],[142,1,'edge',['Microsoft',64],['Edge',34]],[332,1,'iso',['Kali Linux.iso',88]],
  [617,0,'work',['work',34]],[712,0,'web',['web',28]],[807,0,'dev',['development',89]],[902,0,'cpu',['cpu-funtion',81]],[997,0,'office',['ms-office',63]],[1092,0,'hobby',['hobby-work',82]],[1187,0,'avira',['Avira',34]],
  [1282,0,'alzip',['알집',29]],[1377,0,'player',['player',41]],[1472,0,'game',['game',38]],[1567,0,'text',['주말N영화.txt',91]],[1662,0,'google',['google',48]],[1757,0,'adobe',['Adobe',45],['Creati...',49]],[1852,0,'major',['전공',29]],
  [47,3,'jar',['common-1....',86]],[332,3,'text',['K-001.txt',59]],[47,4,'docs',['SonWooKy...',83]],[47,5,'docs',['SonWooKy...',83]],
  [142,6,'bak',['Display',49],['Factorial.bak',84]],[47,7,'mysql',['창의프로젝...',84]],[1852,8,'ini',['desktop.ini',74]],
];
document.getElementById('desktop').innerHTML = items.map(([x,row,icon,...labels]) => `
  <div class="absolute w-[96px] flex flex-col items-center text-[15px] leading-[20px]" style="left:${x-48}px;top:${5+row*110}px">
    <svg class="w-[48px] h-[48px] mb-[2px]" viewBox="0 0 48 48">${icons[icon]}</svg>
    ${labels.map(([t,w]) => `<span class="whitespace-pre h-[20px]" data-w="${w}">${t}</span>`).join('')}
  </div>`).join('');

const txt = (x,y,s,fill,t) => `<text x="${x}" y="${y}" font-family="Open Sans" font-size="${s}" font-weight="bold" fill="${fill}" text-anchor="middle">${t}</text>`;
// [svg content, running state]
const tasks = [
  ['<path d="M1 12L16 2l15 10v16H1z" fill="#fff"/><path d="M3 12h26L17 17z" fill="#0a0a0a"/><path d="M17 17l12 9" stroke="#0a0a0a" stroke-width="1"/>', 'badge'],
  ['<path d="M1 14h17l3 17q-6 1-10-2-3 3-8 2 3-3 2-5-4-5-4-12z" fill="#1fb9a3"/><path d="M1 14A15 15 0 0131 12Q24 12 20 18q-7-8-19-4z" fill="#232a6a"/><path d="M31 12c2 10-3 18-13 19 1-8 5-16 13-19z" fill="#e8f1ee"/><circle cx="9" cy="18" r="1.200" fill="#123"/>', ''],
  ['<use href="#chrome" width="32" height="32"/>', 'multi'],
  ['<rect x="-1" width="34" height="33" rx="3" fill="#fff"/><g fill="#0f62f0"><path d="M11 6l5 3.300-5 3.300-5-3.300zM21 6l5 3.300-5 3.300-5-3.300zM11 13l5 3.300-5 3.300-5-3.300zM21 13l5 3.300-5 3.300-5-3.300zM16 20.500l5 3-5 3.200-5-3.200z"/></g>', ''],
  ['<path d="M2 8l14-6 14 5-14 6z" fill="#36c1de"/><path d="M2 8l14 5v17L3 24z" fill="#0d5c9e"/><path d="M16 13l14-6-1 17-13 6z" fill="#0a3e7c"/>' + txt(9.5,24,15,'#b8dc3c','T') + txt(22,23,11,'#ef8122','W'), ''],
  ['<rect x="-1" width="34" height="32" fill="#e9e7ea"/><path d="M16 3l4 10h10l-8 6 4 10-10-6z" fill="#d8304c"/><path d="M16 3l-4 10H2l8 6-4 10 10-6z" fill="#f3b012"/><path d="M16 3l4 10-4 5z" fill="#7d1d59"/><path d="M20 13h10l-8 6-6-1z" fill="#d33045"/><path d="M16 18l6 1 4 10-10-6z" fill="#a0a0a4"/><path d="M16 23L6 29l4-10 6-1z" fill="#4a2a80"/>', ''],
  ['<rect width="32" height="32" rx="3" fill="#25607f"/><path d="M8 24c-4-10-6-18 1-17 8 2 11 9 13 14 1 2 6 3 3 6M8 24l2-4 4 4" fill="none" stroke="#dbe7ee" stroke-width="1.400"/><path d="M24 4l4 5M23 6l3-3" stroke="#fff" stroke-width="2"/>', ''],
  ['<circle cx="16" cy="16" r="14.500" fill="#0b57d8"/><path d="M16 6a7 7 0 013 13.300V26h-6v-6.700A7 7 0 0116 6z" fill="#fff"/><circle cx="16" cy="13" r="2.600" fill="#0b57d8"/>', ''],
  ['<circle cx="16" cy="15" r="14" fill="#79b843"/><path d="M14 11L7 30M18 11l7 19" stroke="#f2f2f2" stroke-width="3.200"/><path d="M8 20q8 7 16 0" stroke="#fff" stroke-width="2" fill="none"/><path d="M16 5v4" stroke="#546269" stroke-width="3"/><circle cx="16" cy="11" r="4" fill="#546269"/><circle cx="16" cy="11" r="1.600" fill="#ddd"/>', ''],
  ['<circle cx="16" cy="16" r="15" fill="#8c3fa0" stroke="#ddd" stroke-width="1.200"/><path d="M8 8l4 2h8l4-2 1 6c1 6-2 8-6 9l1 8h-8l0-5c-4 1-5-3-7-4 4-1 4 2 7 1l1-1c-5-1-7-4-6-9z" fill="#f4f4f4"/>', ''],
  ['<rect x="-1" width="34" height="33" fill="#fae100"/><path d="M16 5c8 0 12 4 12 9.500S23 24 17 24l-6 4 1-5c-5-1-8-4-8-8.500C4 9 8 5 16 5z" fill="#3b1e1e"/>' + txt(16,18,8.5,'#fae100','TALK'), 'kakao'],
  ['<use href="#edge" x="1" y="1" width="30" height="30" fill="#0f7bd8"/>', ''],
  ['<path d="M3 5l25-2 1 25-25 2z" fill="#fff"/><path d="M3 5l12-1-8 12-4 0z" fill="#72c9c0"/><path d="M17 4l11-1 1 12-9-3z" fill="#e7a82b"/><path d="M29 17v11l-14 1 8-10z" fill="#df2654"/><path d="M4 18l7 7-3 5-4 0z" fill="#3a9a78"/>' + txt(16,22,16,'#222','S'), ''],
  ['<circle cx="16" cy="16" r="16" fill="#48b27c"/><g fill="none" stroke="#e8f6ee" stroke-width="1.300"><ellipse cx="16" cy="16" rx="4" ry="11"/><ellipse cx="16" cy="16" rx="4" ry="11" transform="rotate(60 16 16)"/><ellipse cx="16" cy="16" rx="4" ry="11" transform="rotate(-60 16 16)"/></g><circle cx="16" cy="16" r="1.800" fill="#fff"/>', ''],
  ['<path d="M14 1a15 15 0 000 30A16 16 0 0114 1z" fill="#f7941e"/><circle cx="18" cy="16" r="14" fill="#2c2255"/><path d="M4 12h28M4 16h28M4 20h28" stroke="#dfe0ee" stroke-width="2"/>', ''],
  ['<path d="M22 1l9 3.500v27H1V24L17 12 21 2z" fill="#68217a"/><path d="M5 11l3-1 5 4 8-8 4 2v18l-4 2-8-8-5 4-3-1z" fill="#fff"/><path d="M8 14v6l3-3zM21 12l-5 5 5 5z" fill="#68217a"/>', ''],
  ['<rect x="-1" width="34" height="33" fill="#e92f35"/><path d="M10 12q6-6 12 0zM16 6v4M11 3l5 4 5-4" stroke="#fff" stroke-width="1.500" fill="#fff"/><circle cx="16" cy="20" r="9" fill="#fff"/><path d="M16 12v17" stroke="#e92f35" stroke-width="1"/><g fill="#e92f35"><circle cx="12" cy="17" r="2"/><circle cx="20" cy="17" r="2"/><circle cx="12" cy="23" r="2"/><circle cx="20" cy="23" r="2"/></g>', ''],
  ['<path d="M2 3l12 2 6-3 8 2 4 12-6 2-2 12-18 1-3-12z" fill="#18b8d8"/><path d="M20 2l8 2 4 12-8-4z" fill="#f3e94a"/><rect x="5" y="5" width="22" height="22" fill="#111"/><path d="M8 24h8" stroke="#fff" stroke-width="1.500"/>' + txt(16,17,11.5,'#fff','WS'), ''],
  ['<path d="M0 1h32v30H0z" fill="#2bd18c"/><path d="M16 31L32 15v16zM0 31V22l9 9z" fill="#f5ee52"/><path d="M20 1h12v10z" fill="#19bfdd"/><rect x="5" y="5" width="22" height="22" fill="#111"/><path d="M7.500 24h8" stroke="#fff" stroke-width="1.500"/>' + txt(16,17.5,12.5,'#fff','PC'), ''],
  ['<path d="M23 0l9 4v24l-9 4L2 26l21 1z" fill="#0c6cb4"/><path d="M2 11l2-1 5 4 7-8 3 1v17l-3 1-7-8-5 4-2-1 4-4zM16 12l-5 4 5 4z" fill="#2489ca"/>', ''],
  ['<path d="M1 4h12l3 3h15v20H1z" fill="#ffe08a"/><path d="M1 4h12l2 3H1z" fill="#f6b62c"/><path d="M6 17h20v12h-5v-7H11v7H6z" fill="#37aee6"/>', 'multi'],
  ['<rect width="32" height="32" rx="6" fill="#f4f6f8"/><path d="M4 6v19M7 6v20M10 5v22" stroke="#2b93cc" stroke-width="1.500"/><path d="M13 5l16 3v17l-16 5z" fill="#2b93cc"/><path d="M23 10v4M20 16h6M23 20v5" stroke="#fff" stroke-width="1.500"/><circle cx="23" cy="17" r="2.500" fill="none" stroke="#fff"/>', 'on'],
  ['<path d="M17 5h14v22H17z" fill="#fff" stroke="#d04423" stroke-width="1.500"/><path d="M20 11h8M20 20h8M20 23.500h8" stroke="#d04423" stroke-width="1.800"/><path d="M1 5l18-4v30L1 27z" fill="#d04423"/>' + txt(10,22,17,'#fff','P'), 'on'],
  ['<use href="#vm" width="32" height="32"/>', 'on'],
  ['<rect x="-1" y=".5" width="33" height="31" fill="url(#gKnife)" stroke="#a66" stroke-width="1"/><path d="M7 4q8 5 14 16l-3 2Q10 14 7 4z" fill="#e8e8e8" stroke="#111" stroke-width="1"/><path d="M19 21q4 0 5 3 4 4 2 5-3 0-4-3-3-1-3-5z" fill="#fff" stroke="#111" stroke-width="1.300"/>', 'on'],
];
document.getElementById('tasks').innerHTML = tasks.map(([svg,state],i) => `
  <div class="relative h-[50px] flex items-center justify-center ${i < 10 ? 'w-[55px]' : 'w-[54px]'} ${state === 'kakao' ? 'ml-px bg-[#9e551f]' : ''}">
    <svg class="w-[28px] h-[28px] overflow-visible" viewBox="0 0 32 32">${svg}</svg>
    ${state === 'badge' ? '<b class="absolute left-[32px] top-[24px] w-[21px] h-[21px] rounded-full border border-[#888] bg-[#2b2b2b] text-[14px] leading-[19px] text-center">4</b>' : ''}
    ${state === 'on' ? '<i class="absolute left-[5px] bottom-0 w-[44px] h-[3px] bg-[#76b9ed]"></i>' : ''}
    ${state === 'multi' ? '<i class="absolute left-[5px] bottom-0 w-[33px] h-[3px] bg-[#76b9ed]"></i><i class="absolute left-[38px] bottom-0 w-[11px] h-[3px] bg-[#5b8fbb]"></i>' : ''}
    ${state === 'kakao' ? '<i class="absolute left-0 bottom-0 w-[54px] h-[3px] bg-[#ff7a0f]"></i>' : ''}
  </div>`).join('');

// Track each label so that it fills its intended width. Widths are taken from a canvas
// in the label's own font, which does not depend on how the label wraps.
const ctx = document.createElement('canvas').getContext('2d');
function fitLabels() {
  document.querySelectorAll('[data-w]').forEach(el => {
    const style = getComputedStyle(el);
    ctx.font = `${style.fontWeight} ${style.fontSize} ${style.fontFamily}`;
    const text = el.textContent;
    const spacing = (el.dataset.w - ctx.measureText(text).width) / (text.length - 1);
    el.style.letterSpacing = spacing + 'px';
    el.style.marginRight = -spacing + 'px';
  });
}
fitLabels();
addEventListener('load', () => {
  fitLabels();
  requestAnimationFrame(fitLabels);
  document.fonts.ready.then(fitLabels);
  [50, 150, 400].forEach(ms => setTimeout(fitLabels, ms));
});
</script>
</body>
</html>
